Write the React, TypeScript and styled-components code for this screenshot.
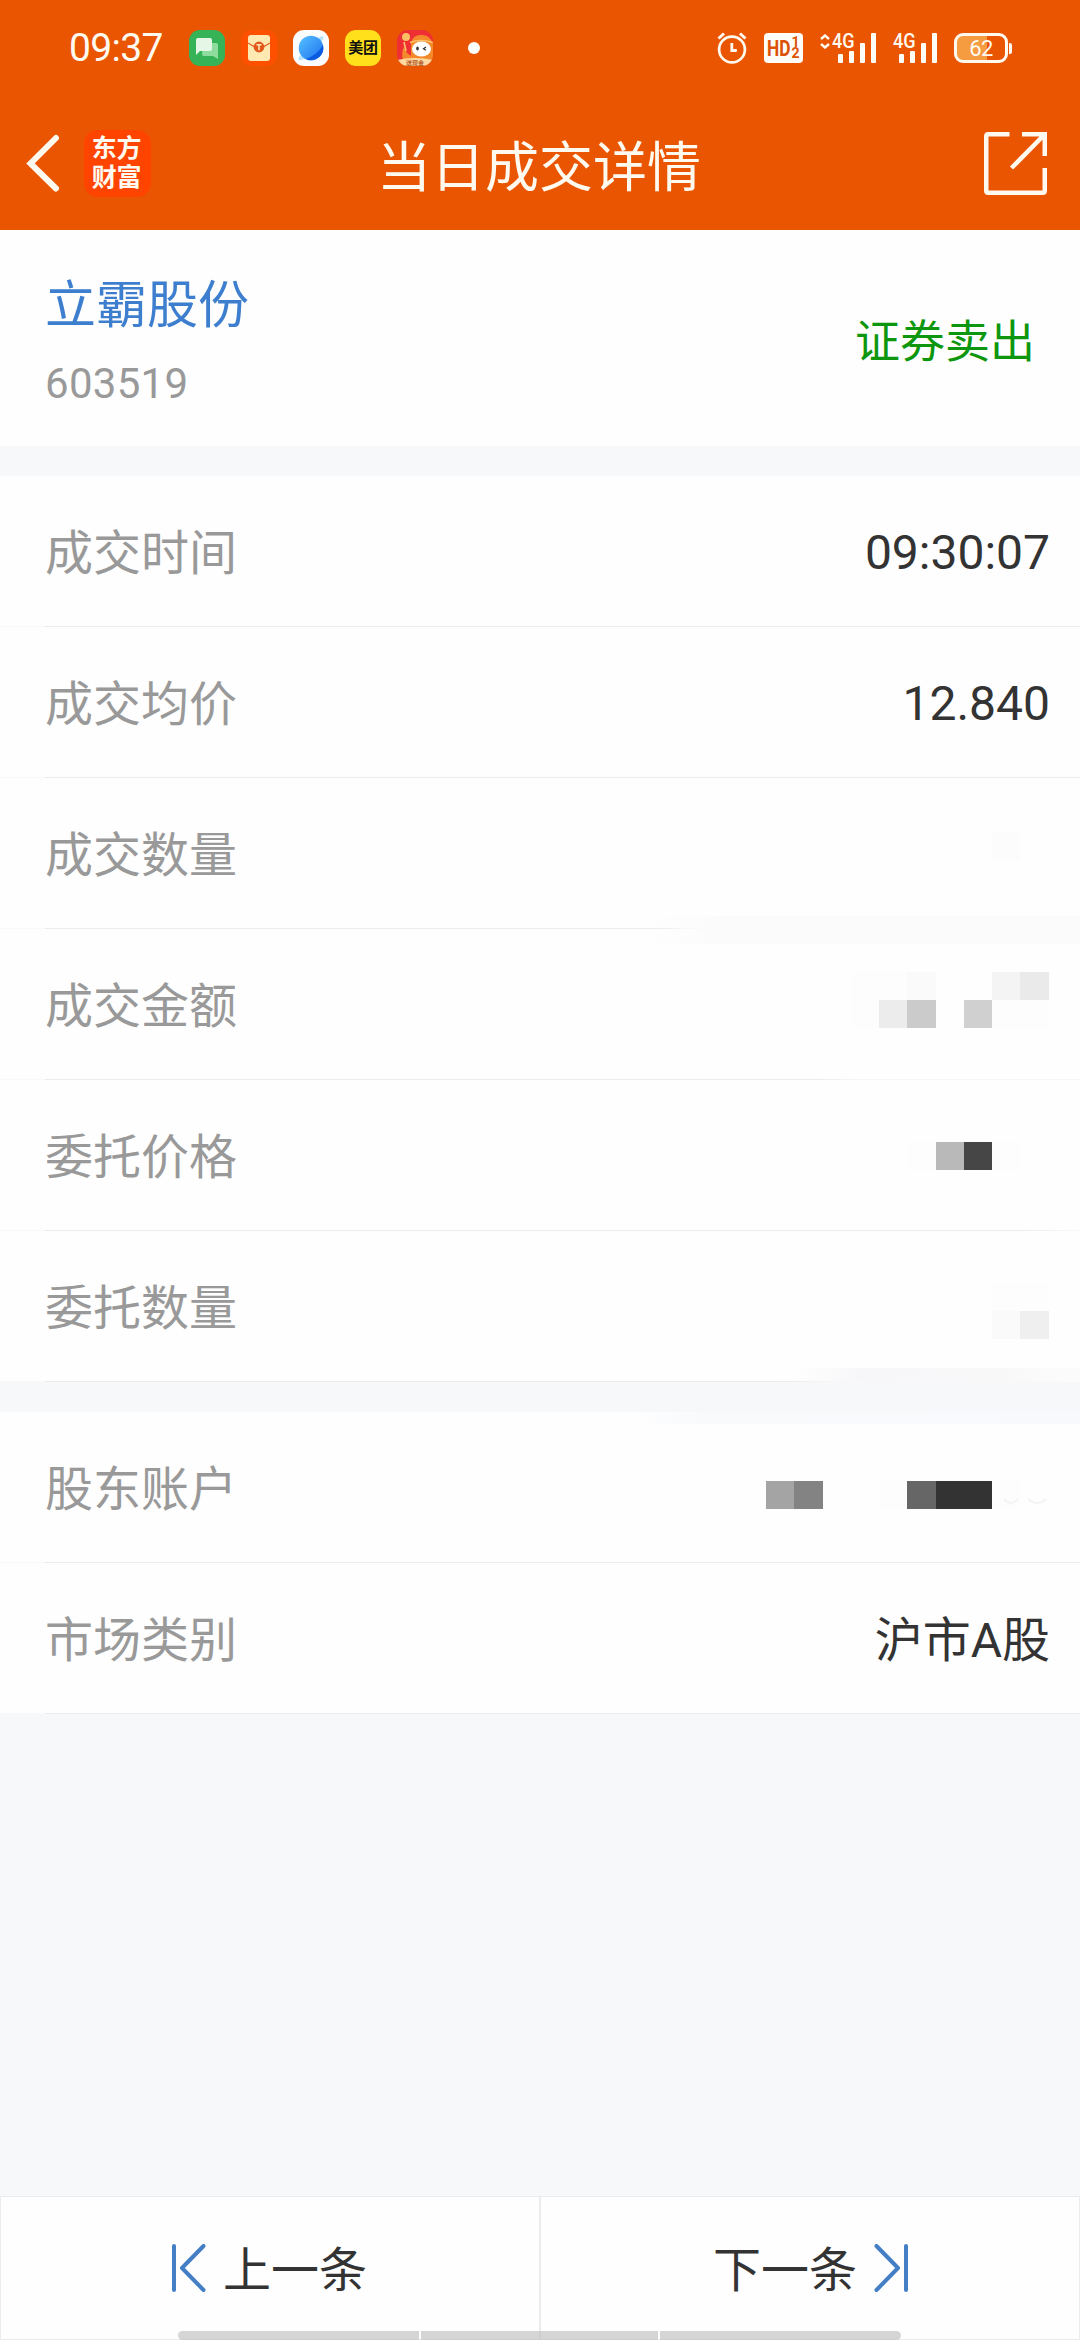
import React from 'react';
import styled, { createGlobalStyle } from 'styled-components';

const GlobalStyle = createGlobalStyle`
  * { box-sizing: border-box; }
  body {
    margin: 0;
    background: #f7f8fa;
    font-family: Roboto, 'Noto Sans CJK SC', sans-serif;
    color: #333;
  }
`;

const Screen = styled.div`
  width: 1080px;
  height: 2340px;
  display: flex;
  flex-direction: column;
  overflow: hidden;
  background: #f7f8fa;
  position: relative;
`;

const Header = styled.header`
  height: 230px;
  flex: none;
  background: #ea5502;
  color: #fffaf0;
`;

const StatusBar = styled.div`
  height: 96px;
  padding: 0 68px 0 69px;
  display: flex;
  align-items: center;
  justify-content: space-between;
`;

const StatusSide = styled.div<{ $gap: number }>`
  display: flex;
  align-items: center;
  gap: ${(p) => p.$gap}px;
`;

const Clock = styled.span`
  width: 104px;
  font-size: 39px;
  line-height: 40px;
  letter-spacing: -0.7px;
`;

const Dot = styled.span`
  width: 12px;
  height: 12px;
  margin-left: 19px;
  border-radius: 50%;
  background: #fff;
`;

const NavBar = styled.nav`
  height: 134px;
  padding: 0 33px 0 26px;
  display: grid;
  grid-template-columns: 351px 324px 1fr;
  align-items: center;
`;

const NavStart = styled.div`
  display: flex;
  align-items: center;
  gap: 24px;
`;

const BrandLogo = styled.div`
  width: 67px;
  height: 67px;
  padding-right: 2px;
  border-radius: 14px;
  background: #ff4400;
  display: flex;
  flex-direction: column;
  align-items: center;
  justify-content: center;
  gap: 4px;
  font-size: 25px;
  font-weight: 700;
  line-height: 25px;
  letter-spacing: -0.3px;
`;

const Title = styled.h1`
  margin: 0;
  padding-top: 11px;
  font-size: 54px;
  font-weight: 400;
  line-height: 64px;
  white-space: nowrap;
`;

const NavEnd = styled.div`
  display: flex;
  justify-content: flex-end;
`;

const StockCard = styled.section`
  height: 216px;
  padding: 8px 45px 0;
  flex: none;
  background: #fefefe;
  display: flex;
  align-items: center;
  justify-content: space-between;
`;

const StockName = styled.div`
  font-size: 51px;
  line-height: 60px;
  color: #3d7fce;
`;

const StockCode = styled.div`
  margin-top: 23px;
  font-size: 42px;
  line-height: 50px;
  letter-spacing: 0.3px;
  color: #999;
`;

const Side = styled.div`
  padding-top: 1px;
  font-size: 45px;
  line-height: 54px;
  color: #0e970e;
`;

const Group = styled.section`
  margin-top: 30px;
  flex: none;
  background: #fefefe;
`;

const Row = styled.div`
  height: 150px;
  padding: 0 30px 0 45px;
  display: flex;
  align-items: center;
  justify-content: space-between;
`;

const Divider = styled.div<{ $fadeFrom?: number; $fadeTo?: number; $end?: string }>`
  height: 1px;
  background: linear-gradient(
    to right,
    #f8f8f8 45px,
    #ebebeb 45px,
    #ebebeb ${(p) => p.$fadeFrom ?? 1080}px,
    ${(p) => p.$end ?? '#ebebeb'} ${(p) => p.$fadeTo ?? 1080}px
  );
`;

const Label = styled.span`
  padding-top: 6px;
  font-size: 48px;
  line-height: 58px;
  color: #999;
`;

const Value = styled.span<{ $cjk: boolean }>`
  padding-top: ${(p) => (p.$cjk ? 5 : 3)}px;
  font-size: 48px;
  line-height: 58px;
  color: #333;
`;

const Mosaic = styled.div<{ $top: number }>`
  align-self: flex-start;
  margin: ${(p) => p.$top}px 1px 0 0;
  display: grid;
  grid-template-columns: 28px 29px 28px 28px 28px 29px 28px 28px 28px 29px;
  grid-auto-rows: 28px;
`;

const Tile = styled.span<{ $shade: string }>`
  background: ${(p) => p.$shade};
`;

const Smear = styled.div<{ $left: number; $top: number; $height: number; $paint: string }>`
  position: absolute;
  left: ${(p) => p.$left}px;
  right: 0;
  top: ${(p) => p.$top}px;
  height: ${(p) => p.$height}px;
  background: ${(p) => p.$paint};
`;

const ArcTraces = styled.svg`
  position: absolute;
  left: 1000px;
  top: 1490px;
`;

const Pager = styled.footer`
  height: 144px;
  flex: none;
  margin-top: auto;
  display: grid;
  grid-template-columns: 1fr 1fr;
`;

const PagerButton = styled.button<{ $pad: number }>`
  border: 1px solid #ebebeb;
  background: #fefefe;
  padding: 0 0 1px ${(p) => p.$pad}px;
  display: flex;
  align-items: center;
  justify-content: flex-start;
  gap: 17px;
  font: inherit;
  font-size: 48px;
  line-height: 58px;
  color: #333;
`;

const PagerText = styled.span`
  padding-top: 6px;
`;

const GestureBar = styled.div`
  position: absolute;
  left: 178px;
  bottom: 0;
  width: 723px;
  height: 9px;
  display: grid;
  grid-template-columns: 241px 237px 241px;
  gap: 2px;
  border-radius: 5px;
  overflow: hidden;
`;

const GestureSegment = styled.span`
  background: rgba(190, 190, 190, 0.65);
`;

const MessageIcon = () => (
  <svg width="36" height="36" viewBox="0 0 36 36">
    <rect width="36" height="36" rx="11" fill="#35b356" />
    <path d="M14 13h13q2 0 2 2v14l-5-3H15q-2 0-2-2z" fill="#8fdc9f" />
    <path d="M9 8h12q2 0 2 2v9q0 2-2 2H11l-4 4V10q0-2 2-2z" fill="#e5f6e6" />
  </svg>
);

const EnvelopeIcon = () => (
  <svg width="36" height="36" viewBox="0 0 36 36">
    <rect width="36" height="36" rx="11" fill="#ff5000" />
    <rect x="7" y="5" width="22" height="26" rx="3" fill="#ffe9b3" />
    <path d="M7 13l7 4h8l7-4" fill="none" stroke="#e2642a" strokeWidth="1.3" />
    <circle cx="18" cy="17" r="5.4" fill="#e2581c" />
    <path d="M15.5 14.8h5M18 14.8v5.4" stroke="#ffe9b3" strokeWidth="1.5" />
  </svg>
);

const BrowserIcon = () => (
  <svg width="36" height="36" viewBox="0 0 36 36">
    <defs>
      <linearGradient id="planet" x1="0" y1="0" x2="1" y2="1">
        <stop offset="0" stopColor="#56c2ff" />
        <stop offset="1" stopColor="#1d6ff0" />
      </linearGradient>
    </defs>
    <rect width="36" height="36" rx="11" fill="#fbfcfe" />
    <path d="M25 8q7-4 5 1Q24 22 11 29q-7 3-5-2z" fill="#b4e2fb" />
    <circle cx="18" cy="18" r="12.3" fill="url(#planet)" />
    <path d="M30 15A12.3 12.3 0 0 1 13 29Q24 25 30 15z" fill="#0a5be0" />
  </svg>
);

const MeituanBadge = styled.span`
  width: 36px;
  height: 36px;
  border-radius: 11px;
  background: #ffe01b;
  color: #111;
  font-size: 15px;
  font-weight: 700;
  line-height: 36px;
  text-align: center;
  letter-spacing: -0.3px;
`;

const MascotBadge = styled.span`
  width: 36px;
  height: 36px;
  position: relative;
  display: flex;
  align-items: flex-end;
  justify-content: center;
  font-size: 6px;
  font-weight: 700;
  line-height: 7px;
  color: #b4602c;
`;

const MascotArt = styled.svg`
  position: absolute;
  inset: 0;
`;

const MascotCaption = styled.span`
  position: relative;
`;

const MascotIcon = () => (
  <MascotBadge>
    <MascotArt width="36" height="36" viewBox="0 0 36 36">
      <defs>
        <clipPath id="mascotShape">
          <rect width="36" height="36" rx="11" />
        </clipPath>
      </defs>
      <g clipPath="url(#mascotShape)">
        <rect width="36" height="36" fill="#ee2f33" />
        <path d="M14 12Q17 4 25 5q8 0 11 9v17H6q-2-9 1-14l3 6 4 3z" fill="#f58a2c" />
        <circle cx="9" cy="7" r="4" fill="#ffbf62" />
        <path d="M7 12l2 9M13 12.500q11-4 23 0" stroke="#ffc06a" strokeWidth="1.6" fill="none" />
        <ellipse cx="24.500" cy="19" rx="9.500" ry="7.500" fill="#fff" />
        <ellipse cx="20.500" cy="18.500" rx="1.300" ry="2" fill="#333" />
        <path d="M29 17l-2.500 1.800 2.500 1.400" stroke="#333" strokeWidth="1.200" fill="none" />
        <path d="M0 30q18-4 36 0v6H0z" fill="#ffd9a0" />
      </g>
    </MascotArt>
    <MascotCaption>送现金</MascotCaption>
  </MascotBadge>
);

const AlarmIcon = () => (
  <svg width="30" height="32" viewBox="0 0 30 32" fill="none" stroke="#fffaf0">
    <circle cx="15" cy="17.500" r="12.900" strokeWidth="2.700" />
    <path d="M14.800 11v7.500h5" strokeWidth="2.800" />
    <path d="M1.500 6.500L7 1.500M28.500 6.500L23 1.500" strokeWidth="3" />
  </svg>
);

const HdBadge = styled.span`
  width: 39px;
  height: 30px;
  padding-left: 3px;
  border-radius: 4px;
  background: #fffdf8;
  color: #dc5206;
  display: grid;
  grid-template-columns: 24px 9px;
  align-items: center;
`;

const HdText = styled.span`
  font-size: 22.5px;
  font-weight: 700;
  line-height: 30px;
  transform: scaleX(0.77);
  transform-origin: left center;
`;

const HdDigits = styled.span`
  display: flex;
  flex-direction: column;
  align-items: center;
  font-size: 14px;
  font-weight: 700;
  line-height: 11.5px;
`;

const SignalBox = styled.span<{ $lead: number }>`
  height: 30px;
  padding-left: ${(p) => p.$lead}px;
  position: relative;
  display: flex;
  align-items: flex-end;
  gap: 6px;
`;

const NetworkType = styled.span<{ $left: number }>`
  position: absolute;
  left: ${(p) => p.$left}px;
  top: -1px;
  font-size: 21px;
  font-weight: 500;
  line-height: 18px;
  transform: scaleX(0.86);
  transform-origin: left center;
`;

const DataArrows = styled.svg`
  position: absolute;
  left: 0;
  top: 1px;
`;

const Bar = styled.span<{ $h: number }>`
  width: 5px;
  height: ${(p) => p.$h}px;
  border-radius: 1px;
  background: #fffdf8;
`;

const bars = [9, 12, 20, 30];

const Signal = ({ withArrows }: { withArrows?: boolean }) => (
  <SignalBox $lead={withArrows ? 18 : 6}>
    {withArrows && (
      <DataArrows width="10" height="15" viewBox="0 0 10 15" fill="none" stroke="#fffaf0" strokeWidth="2.400">
        <path d="M1 5l4-3.500L9 5M1 10l4 3.500L9 10" />
      </DataArrows>
    )}
    <NetworkType $left={withArrows ? 12 : 0}>4G</NetworkType>
    {bars.map((h) => (
      <Bar key={h} $h={h} />
    ))}
  </SignalBox>
);

const BatteryWrap = styled.span`
  display: flex;
  align-items: center;
  gap: 1px;
`;

const BatteryBody = styled.span`
  width: 54px;
  height: 30px;
  border: 3px solid #fffaf0;
  border-radius: 9px;
  background: linear-gradient(to right, #f59b40 30px, transparent 30px) no-repeat;
  font-size: 22px;
  line-height: 25px;
  text-align: center;
  letter-spacing: -0.5px;
`;

const BatteryTip = styled.span`
  width: 3px;
  height: 11px;
  border-radius: 0 2px 2px 0;
  background: #fffaf0;
`;

const BackIcon = () => (
  <svg width="34" height="58" viewBox="0 0 34 58" fill="none" stroke="#fffaf0" strokeWidth="6" strokeLinecap="round">
    <path d="M30 4L4.500 29.500 30 54.500" />
  </svg>
);

const ShareIcon = () => (
  <svg width="63" height="63" viewBox="0 0 63 63" fill="none" stroke="#fffaf0" strokeWidth="4.500">
    <path d="M25.500 2.250H4.250q-2 0-2 2V58.750q0 2 2 2H58.750q2 0 2-2V36" />
    <path d="M38 2.250H60.750V24M60.500 2.500L27.500 36" />
  </svg>
);

const PreviousIcon = () => (
  <svg width="34" height="48" viewBox="0 0 34 48" fill="none" stroke="#447fc6" strokeWidth="4" strokeLinecap="round" strokeLinejoin="round">
    <path d="M2 2V46M31.500 2L10 24 31.500 46" />
  </svg>
);

const NextIcon = () => (
  <svg width="34" height="48" viewBox="0 0 34 48" fill="none" stroke="#447fc6" strokeWidth="4" strokeLinecap="round" strokeLinejoin="round">
    <path d="M32 2V46M2.500 2L24 24 2.500 46" />
  </svg>
);

type Detail = {
  label: string;
  value?: string;
  cjk?: boolean;
  mosaicTop?: number;
  tiles?: string[];
  fade?: [number, number, string];
};

const _ = 'transparent';

const tradeDetails: Detail[] = [
  { label: '成交时间', value: '09:30:07' },
  { label: '成交均价', value: '12.840' },
  {
    label: '成交数量',
    mosaicTop: 54,
    tiles: [_, _, _, _, _, _, _, _, '#fcfcfc', _],
    fade: [664, 708, '#fcfcfc'],
  },
  {
    label: '成交金额',
    mosaicTop: 43,
    tiles: [
      _, _, _, '#fdfdfd', '#fdfdfd', '#fafafa', _, '#fefefe', '#f4f4f4', '#eaeaea',
      _, _, _, '#fdfdfd', '#ececec', '#cbcbcb', _, '#d0d0d0', '#fdfdfd', '#fdfdfd',
    ],
    fade: [815, 860, '#f7f7f7'],
  },
  {
    label: '委托价格',
    mosaicTop: 62,
    tiles: [_, _, _, _, _, '#fdfdfd', '#b9b9b9', '#464646', '#fdfdfd', _],
    fade: [1015, 1080, '#f9f9f9'],
  },
  {
    label: '委托数量',
    mosaicTop: 52,
    tiles: [
      _, _, _, _, _, _, _, _, '#fdfdfd', '#fdfdfd',
      _, _, _, _, _, _, _, _, '#fafafa', '#efefef',
    ],
    fade: [780, 835, '#f7f7f9'],
  },
];

const accountDetails: Detail[] = [
  {
    label: '股东账户',
    mosaicTop: 69,
    tiles: ['#a4a4a4', '#838383', _, _, '#fdfdfd', '#666', '#333', '#333', '#fdfdfd', _],
  },
  { label: '市场类别', value: '沪市A股', cjk: true },
];

const DetailList = ({ items }: { items: Detail[] }) => (
  <Group>
    {items.map((item) => (
      <React.Fragment key={item.label}>
        <Row>
          <Label>{item.label}</Label>
          {item.value && <Value $cjk={!!item.cjk}>{item.value}</Value>}
          {item.tiles && (
            <Mosaic $top={item.mosaicTop ?? 0}>
              {item.tiles.map((shade, i) => (
                <Tile key={i} $shade={shade} />
              ))}
            </Mosaic>
          )}
        </Row>
        <Divider $fadeFrom={item.fade?.[0]} $fadeTo={item.fade?.[1]} $end={item.fade?.[2]} />
      </React.Fragment>
    ))}
  </Group>
);

export default function App() {
  return (
    <>
      <GlobalStyle />
      <Screen>
        <Header>
          <StatusBar>
            <StatusSide $gap={16}>
              <Clock>09:37</Clock>
              <MessageIcon />
              <EnvelopeIcon />
              <BrowserIcon />
              <MeituanBadge>美团</MeituanBadge>
              <MascotIcon />
              <Dot />
            </StatusSide>
            <StatusSide $gap={17}>
              <AlarmIcon />
              <HdBadge>
                <HdText>HD</HdText>
                <HdDigits>
                  <span>1</span>
                  <span>2</span>
                </HdDigits>
              </HdBadge>
              <Signal withArrows />
              <Signal />
              <BatteryWrap>
                <BatteryBody>62</BatteryBody>
                <BatteryTip />
              </BatteryWrap>
            </StatusSide>
          </StatusBar>
          <NavBar>
            <NavStart>
              <BackIcon />
              <BrandLogo>
                <span>东方</span>
                <span>财富</span>
              </BrandLogo>
            </NavStart>
            <Title>当日成交详情</Title>
            <NavEnd>
              <ShareIcon />
            </NavEnd>
          </NavBar>
        </Header>

        <StockCard>
          <div>
            <StockName>立霸股份</StockName>
            <StockCode>603519</StockCode>
          </div>
          <Side>证券卖出</Side>
        </StockCard>

        <DetailList items={tradeDetails} />
        <DetailList items={accountDetails} />

        <Smear $left={650} $top={916} $height={28} $paint="linear-gradient(100deg, transparent, #fbfbfb 80px)" />
        <Smear $left={798} $top={1368} $height={14} $paint="linear-gradient(100deg, transparent, #f7f7f9 60px, #f8f8f9 200px, #fcfcfc)" />
        <Smear $left={640} $top={1412} $height={12} $paint="linear-gradient(100deg, transparent, #f8fafc 60px, #f7f9fc)" />
        <ArcTraces width="50" height="16" viewBox="0 0 50 16" fill="none" stroke="#f4f4f4" strokeWidth="2">
          <path d="M4 9q7 8 14 0M28 9q9 8 18 0" />
        </ArcTraces>

        <Pager>
          <PagerButton $pad={171}>
            <PreviousIcon />
            <PagerText>上一条</PagerText>
          </PagerButton>
          <PagerButton $pad={172}>
            <PagerText>下一条</PagerText>
            <NextIcon />
          </PagerButton>
        </Pager>
        <GestureBar>
          <GestureSegment />
          <GestureSegment />
          <GestureSegment />
        </GestureBar>
      </Screen>
    </>
  );
}
